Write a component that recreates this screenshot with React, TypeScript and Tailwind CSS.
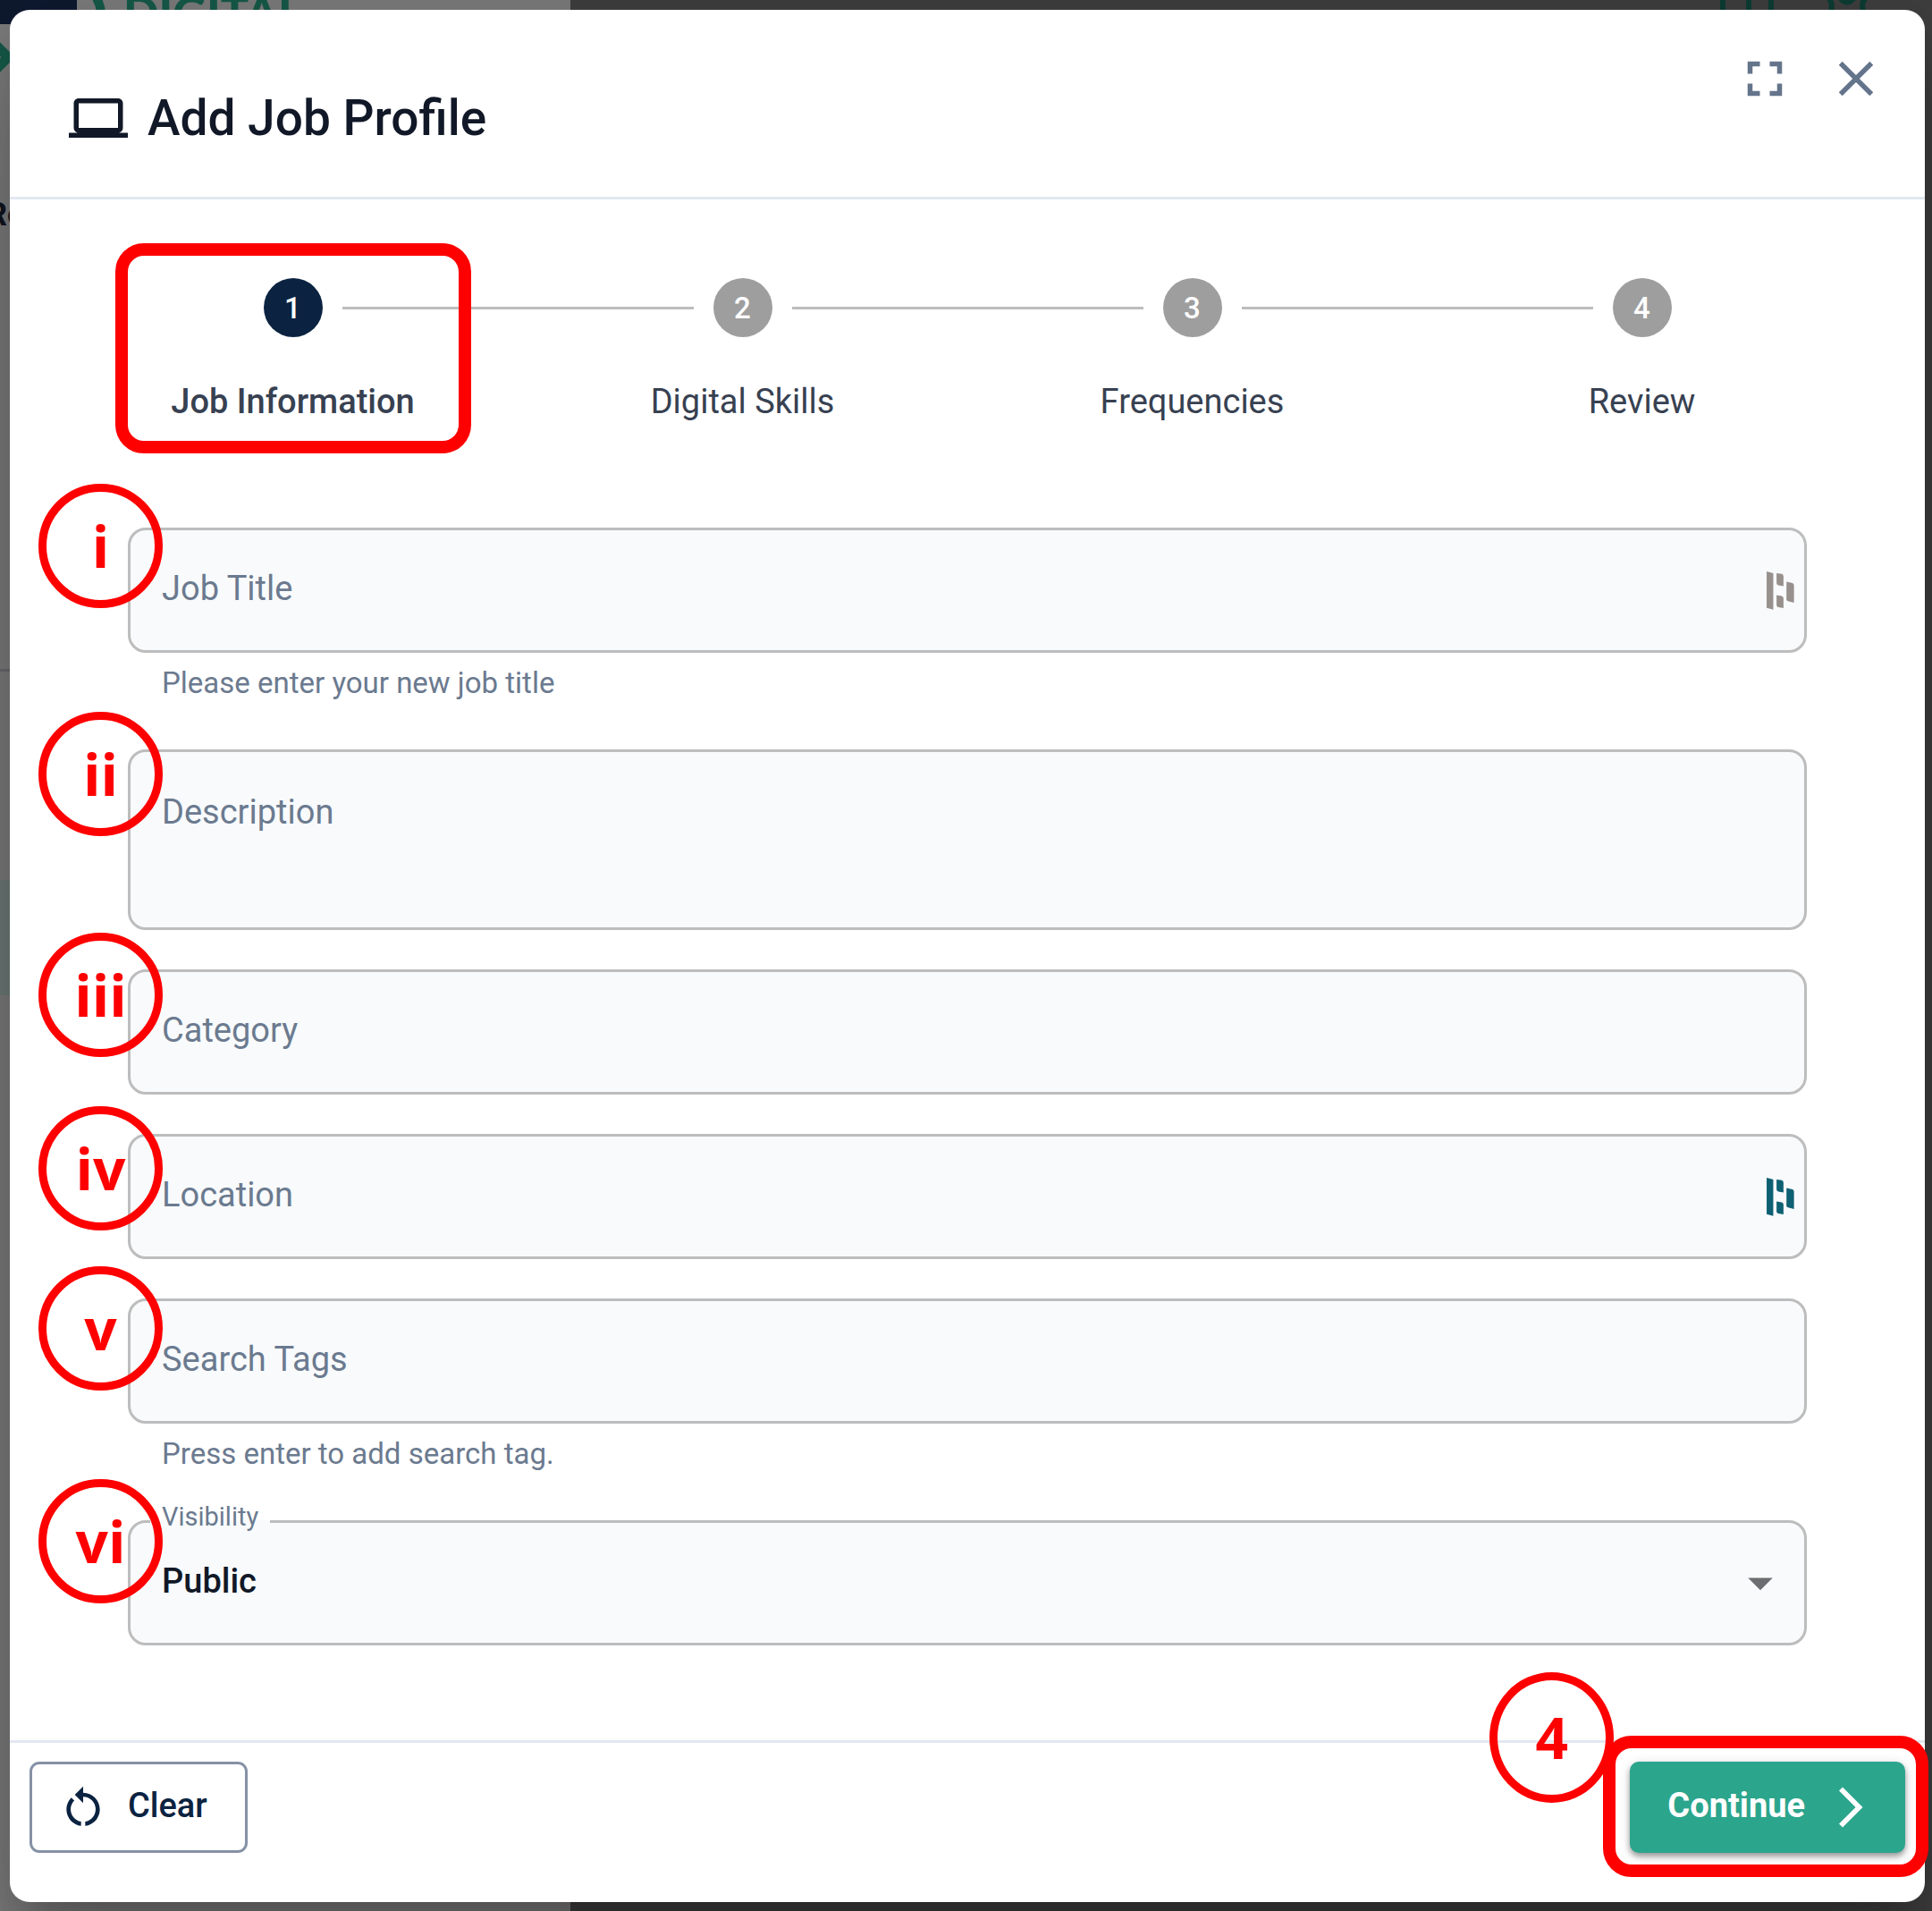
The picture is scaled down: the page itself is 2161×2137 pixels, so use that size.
import type { ReactNode } from 'react';
import {
  MdArrowDropDown,
  MdArrowForwardIos,
  MdClose,
  MdFullscreen,
  MdOutlineComputer,
  MdRestartAlt,
} from 'react-icons/md';
import { clsx } from 'clsx';

const steps = ['Job Information', 'Digital Skills', 'Frequencies', 'Review'];

const inputClass =
  'min-w-0 flex-1 self-stretch bg-transparent pl-[35px] pb-1 text-[38px] text-[#111827] outline-none placeholder:text-[#6b7a8f] placeholder:opacity-100';

function Marker({ className, children }: { className: string; children: ReactNode }) {
  return (
    <span
      className={clsx(
        'pointer-events-none absolute z-10 flex w-[139px] items-center justify-center rounded-[50%] border-[9px] border-[#ff0000] font-["Open_Sans",sans-serif] text-[64px] leading-none font-bold text-[#ff0000]',
        className
      )}
    >
      {children}
    </span>
  );
}

function Highlight({ className }: { className: string }) {
  return (
    <span
      className={clsx(
        'pointer-events-none absolute z-10 rounded-[32px] border-[14px] border-[#ff0000]',
        className
      )}
    />
  );
}

function PasswordManagerIcon({ className }: { className: string }) {
  return (
    <svg viewBox="0 0 92 128" className={clsx('h-[43px] w-[31px] shrink-0', className)} fill="currentColor" aria-hidden="true">
      <path d="M0 0L22 6V127L0 121Z" />
      <path d="M33 6L50 8Q56 10 56 16V49L39 46Q33 44 33 39Z" />
      <path d="M33 79L50 82Q56 84 56 89V122L39 119Q33 117 33 112Z" />
      <path d="M66 34L86 39Q91 41 91 46V104L71 99Q66 97 66 93Z" />
    </svg>
  );
}

interface FieldProps {
  marker: string;
  markerClass: string;
  helper?: string;
  tall?: boolean;
  children: ReactNode;
}

function Field({ marker, markerClass, helper, tall, children }: FieldProps) {
  return (
    <div className="relative">
      <div
        className={clsx(
          'relative flex items-center rounded-[20px] border-[3px] border-[#bdbdbd] bg-slate-50',
          tall ? 'h-[202px]' : 'h-[140px]'
        )}
      >
        {children}
      </div>
      {helper && <p className="mt-3 mb-2 pl-[38px] text-[33px] leading-[44px] text-[#6b7a8f]">{helper}</p>}
      <Marker className={clsx('left-[-100px] h-[139px]', markerClass)}>{marker}</Marker>
    </div>
  );
}

function Stepper() {
  return (
    <ol className="flex px-[65px]">
      {steps.map((label, i) => {
        const active = i === 0;
        return (
          <li key={label} className="relative flex flex-1 flex-col items-center" aria-current={active ? 'step' : undefined}>
            <div className="flex w-full items-center gap-[22px]">
              <span className={clsx('h-[3px] flex-1', i > 0 && 'bg-[#bdbdbd]')} />
              <span
                className={clsx(
                  'flex size-[66px] items-center justify-center rounded-full text-[33px] leading-none font-medium text-white',
                  active ? 'bg-[#0b2341]' : 'bg-[#9e9e9e]'
                )}
              >
                {i + 1}
              </span>
              <span className={clsx('h-[3px] flex-1', i < steps.length - 1 && 'bg-[#bdbdbd]')} />
            </div>
            <span className={clsx('mt-[50px] text-[38px] leading-[44px] text-[#374151]', active && 'font-medium')}>
              {label}
            </span>
            {active && <Highlight className="top-[-39px] h-[235px] w-[398px]" />}
          </li>
        );
      })}
    </ol>
  );
}

/* Page behind the dialog, already dimmed */
function Backdrop() {
  return (
    <div className="absolute inset-0 flex overflow-hidden bg-[#3f3f3f]" aria-hidden="true">
      <div className="relative w-[638px] shrink-0 bg-[#7d7d7d]">
        <div className="absolute top-0 left-0 h-[27px] w-[86px] bg-[#0f1a30]" />
        <svg viewBox="0 0 12 36" className="absolute top-[46px] left-0 h-9 w-3" fill="none" stroke="#175a49" strokeWidth="11">
          <path d="M-6 3L9 18L-6 33" />
        </svg>
        <svg viewBox="0 0 20 14" className="absolute top-0 left-[101px] h-[14px] w-5" fill="none" stroke="#175a49" strokeWidth="10">
          <path d="M3 -8Q11 2 12 14" />
        </svg>
        <span className="absolute top-[-12px] left-[138px] font-[Lato,sans-serif] text-[52px] leading-[50px] font-black text-[#175a49]">
          DIGITAL
        </span>
        <span className="absolute top-[220px] left-[-15px] text-[36px] leading-[40px] font-bold text-[#11151f]">Ro</span>
        <div className="absolute top-[748px] left-0 h-[3px] w-full bg-[#6a6c70]" />
        <div className="absolute top-[984px] left-0 h-[129px] w-full bg-[#6f7c79]" />
      </div>
      <svg viewBox="0 0 180 12" className="absolute top-0 right-[60px] h-3 w-[180px]" fill="none" stroke="#0d3d34" strokeWidth="6">
        <path d="M6 0V12M35 0V12M60 0V12" />
        <path d="M122 -4Q130 1 127 12M168 -4Q160 1 163 12M136 -4Q145 9 154 -4" />
      </svg>
    </div>
  );
}

export default function App() {
  return (
    <div className='relative min-h-screen py-[11px] pr-2 pl-[11px] font-[Roboto,"Liberation_Sans",sans-serif]'>
      <Backdrop />

      <div
        role="dialog"
        aria-labelledby="dialog-title"
        className="relative rounded-[22px] bg-white shadow-[0_30px_41px_-19px_rgba(0,0,0,0.2),0_66px_104px_8px_rgba(0,0,0,0.14),0_25px_126px_22px_rgba(0,0,0,0.12)]"
      >
        <header className="flex items-start justify-between border-b-[3px] border-slate-200 pr-11 pl-[66px]">
          <div className="flex items-center gap-[22px] pt-[88px] pb-[55px] text-[#111827]">
            <MdOutlineComputer className="size-[66px]" />
            <h1 id="dialog-title" className="text-[55px] leading-[66px] font-medium">
              Add Job Profile
            </h1>
          </div>
          <div className="flex gap-9 pt-11 text-[#64748b]">
            <button type="button" aria-label="Fullscreen">
              <MdFullscreen className="size-[66px]" />
            </button>
            <button type="button" aria-label="Close">
              <MdClose className="size-[66px]" />
            </button>
          </div>
        </header>

        <main className="pt-[88px] pb-[106px]">
          <Stepper />

          <form id="job-form" className="mt-[119px] flex flex-col gap-11 px-[132px]">
            <Field marker="i" markerClass="top-[-49px]" helper="Please enter your new job title">
              <input aria-label="Job Title" placeholder="Job Title" className={inputClass} />
              <PasswordManagerIcon className="mr-[11px] text-[#97908d]" />
            </Field>

            <Field marker="ii" markerClass="top-[-42px]" tall>
              <textarea
                aria-label="Description"
                placeholder="Description"
                className={clsx(inputClass, 'resize-none pt-[45px] leading-[44px]')}
              />
            </Field>

            <Field marker="iii" markerClass="top-[-41px]">
              <input aria-label="Category" placeholder="Category" className={inputClass} />
            </Field>

            <Field marker="iv" markerClass="top-[-31px]">
              <input aria-label="Location" placeholder="Location" className={inputClass} />
              <PasswordManagerIcon className="mr-[11px] text-[#0e6073]" />
            </Field>

            <Field marker="v" markerClass="top-[-36px]" helper="Press enter to add search tag.">
              <input aria-label="Search Tags" placeholder="Search Tags" className={inputClass} />
            </Field>

            <Field marker="vi" markerClass="top-[-46px]">
              <label
                htmlFor="visibility"
                className="absolute top-[-27px] left-[22px] bg-linear-to-b from-white from-60% to-slate-50 to-60% px-[13px] text-[29px] leading-[40px] text-[#6b7a8f]"
              >
                Visibility
              </label>
              <select id="visibility" className={clsx(inputClass, 'appearance-none font-medium')}>
                <option>Public</option>
              </select>
              <MdArrowDropDown className="pointer-events-none absolute right-4 size-[66px] text-[#6b6e71]" />
            </Field>
          </form>
        </main>

        <footer className="flex items-center justify-between border-t-[3px] border-slate-200 px-[22px] pt-[21px] pb-[55px]">
          <button
            type="reset"
            form="job-form"
            className="flex h-[102px] items-center gap-[22px] rounded-[11px] border-[3px] border-[#8591a5] pr-[42px] pl-[29px] text-[38px] font-medium text-[#0b2341]"
          >
            <MdRestartAlt className="size-14" />
            <span className="pb-1">Clear</span>
          </button>

          <div className="relative">
            <button
              type="submit"
              form="job-form"
              className="flex h-[102px] items-center gap-6 rounded-[10px] bg-[#2ca58d] pr-[34px] pl-[42px] text-[38px] font-bold text-white shadow-[0_4px_6px_rgba(0,0,0,0.35),0_2px_14px_rgba(0,0,0,0.12)]"
            >
              <span className="pb-1">Continue</span>
              <MdArrowForwardIos className="size-[54px]" />
            </button>
            <Highlight className="top-[-29px] right-[-26px] bottom-[-27px] left-[-30px]" />
            <Marker className="top-[-100px] left-[-157px] h-[146px]">4</Marker>
          </div>
        </footer>
      </div>
    </div>
  );
}
